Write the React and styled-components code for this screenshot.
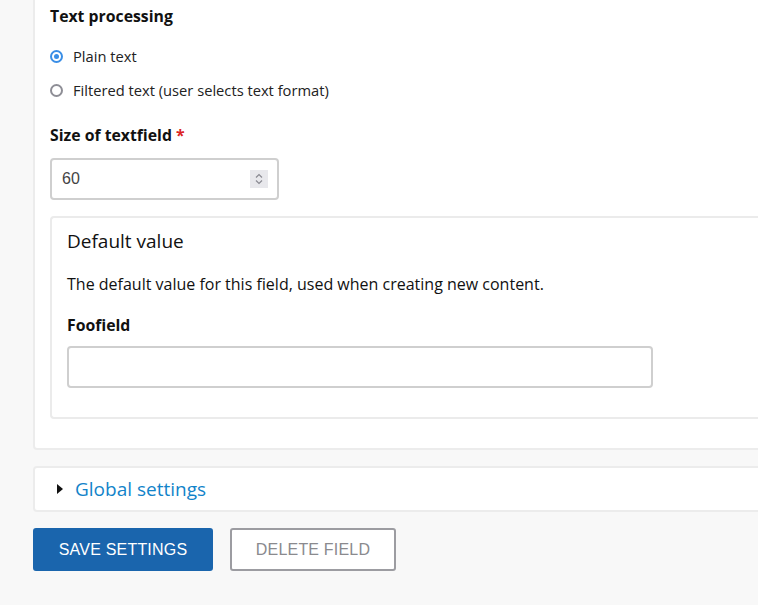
import React from 'react'
import styled, { createGlobalStyle } from 'styled-components'

const GlobalStyle = createGlobalStyle`
  html, body {
    margin: 0;
    padding: 0;
    background: #f8f8f8;
    overflow: hidden;
  }
  body {
    font-family: "Open Sans", "Noto Sans", sans-serif;
    color: #232429;
  }
`

const Page = styled.div`
  width: 758px;
  height: 605px;
  padding-left: 33px;
  box-sizing: border-box;
`

const Panel = styled.div`
  width: 760px;
  background: #fff;
  border: 2px solid #ececec;
  border-top: none;
  border-radius: 0 0 4px 4px;
  padding: 6px 0 29px 15px;
  box-sizing: border-box;
`

const Label = styled.div`
  font-size: 15.8px;
  font-weight: 700;
  line-height: 20px;
  color: #111;
`

const Required = styled.span`
  color: #dc2323;
  margin-left: 4px;
`

const RadioList = styled.div`
  display: flex;
  flex-direction: column;
  gap: 10px;
  margin-top: 18px;
`

const RadioRow = styled.label`
  display: flex;
  align-items: center;
  height: 24px;
  font-size: 14.7px;
  color: #222;
`

const RadioDot = styled.span`
  width: 13px;
  height: 13px;
  border-radius: 50%;
  box-sizing: border-box;
  border: 2px solid ${p => (p.checked ? '#3a8ee6' : '#8e8e96')};
  margin: 0 10px 0 0;
  display: flex;
  align-items: center;
  justify-content: center;
  &::after {
    content: '';
    width: 5px;
    height: 5px;
    border-radius: 50%;
    background: ${p => (p.checked ? '#3a8ee6' : 'transparent')};
  }
`

const FieldLabel = styled(Label)`
  margin-top: 23px;
  margin-bottom: 13px;
`

const NumberBox = styled.div`
  width: 229px;
  height: 42px;
  box-sizing: border-box;
  border: 2px solid #cfcfcf;
  border-radius: 4px;
  display: flex;
  align-items: center;
  justify-content: space-between;
  padding: 0 9px 0 10px;
  font-family: "Liberation Sans", Arial, sans-serif;
  font-size: 16px;
  color: #444;
`

const Spinner = styled.span`
  width: 18px;
  height: 18px;
  background: #e8e8ec;
  display: flex;
  align-items: center;
  justify-content: center;
`

const Fieldset = styled.div`
  margin-top: 16px;
  border: 2px solid #ebebeb;
  border-right: none;
  border-radius: 4px 0 0 4px;
  padding: 10px 0 29px 15px;
`

const Legend = styled.div`
  font-size: 19px;
  line-height: 26px;
  color: #111;
`

const Description = styled.div`
  font-size: 16px;
  line-height: 22px;
  margin-top: 19px;
  color: #111;
`

const SubLabel = styled(Label)`
  line-height: 22px;
  margin-top: 19px;
  margin-bottom: 10px;
`

const TextInput = styled.div`
  width: 586px;
  height: 42px;
  box-sizing: border-box;
  border: 2px solid #cfcfcf;
  border-radius: 4px;
`

const Details = styled.div`
  margin-top: 16px;
  width: 760px;
  height: 46px;
  box-sizing: border-box;
  background: #fff;
  border: 2px solid #ececec;
  border-radius: 4px;
  display: flex;
  align-items: center;
  padding-left: 22px;
`

const Summary = styled.span`
  color: #1283c9;
  font-size: 19px;
  margin-left: 12px;
`

const Actions = styled.div`
  display: flex;
  gap: 17px;
  margin-top: 16px;
`

const Button = styled.button`
  height: 43px;
  width: ${p => p.w}px;
  box-sizing: border-box;
  border-radius: 3px;
  font-family: "Liberation Sans", Arial, sans-serif;
  font-size: 16px;
  text-transform: uppercase;
  letter-spacing: 0.2px;
  cursor: pointer;
  background: ${p => (p.primary ? '#1a65ad' : '#fff')};
  color: ${p => (p.primary ? '#fff' : '#8a8a8e')};
  border: 2px solid ${p => (p.primary ? '#1a65ad' : '#9c9ca1')};
`

export default function App() {
  return (
    <Page>
      <GlobalStyle />
      <Panel>
        <Label>Text processing</Label>
        <RadioList>
          <RadioRow>
            <RadioDot checked />
            Plain text
          </RadioRow>
          <RadioRow>
            <RadioDot />
            Filtered text (user selects text format)
          </RadioRow>
        </RadioList>
        <FieldLabel>
          Size of textfield<Required>*</Required>
        </FieldLabel>
        <NumberBox>
          60
          <Spinner>
            <svg width="10" height="14" viewBox="0 0 10 14" fill="none" stroke="#8a8a92" strokeWidth="1.2">
              <path d="M2 5.5 L5 2.5 L8 5.5" />
              <path d="M2 8.5 L5 11.5 L8 8.5" />
            </svg>
          </Spinner>
        </NumberBox>
        <Fieldset>
          <Legend>Default value</Legend>
          <Description>The default value for this field, used when creating new content.</Description>
          <SubLabel>Foofield</SubLabel>
          <TextInput />
        </Fieldset>
      </Panel>
      <Details>
        <svg width="6" height="10" viewBox="0 0 6 10">
          <path d="M0 0 L6 5 L0 10 Z" fill="#111" />
        </svg>
        <Summary>Global settings</Summary>
      </Details>
      <Actions>
        <Button primary w={180}>Save settings</Button>
        <Button w={166}>Delete field</Button>
      </Actions>
    </Page>
  )
}
